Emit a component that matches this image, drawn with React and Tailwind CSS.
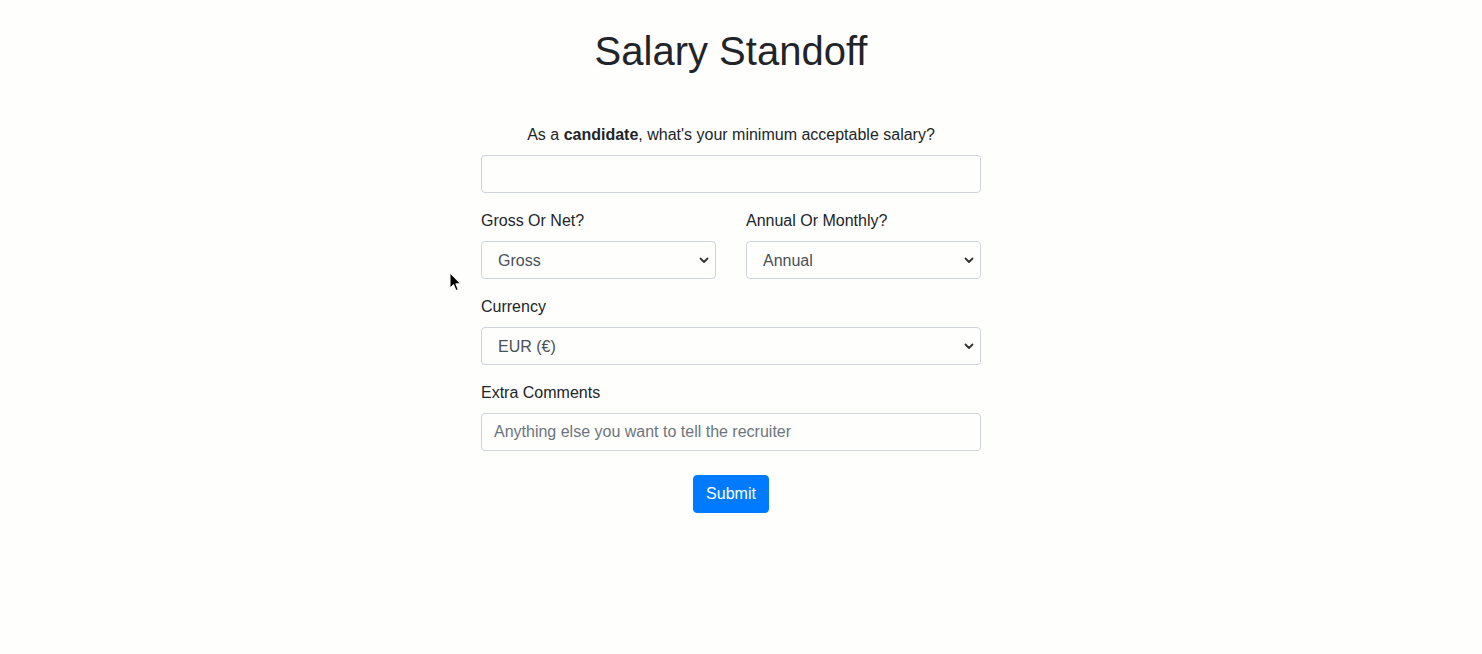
import React from "react";

const Chevron = () => (
  <svg className="pointer-events-none absolute right-[6px] top-1/2 -translate-y-1/2" width="12" height="12" viewBox="0 0 12 12">
    <path d="M2.5 4.5 L6 8 L9.5 4.5" fill="none" stroke="#333" strokeWidth="1.8" strokeLinecap="round" strokeLinejoin="round" />
  </svg>
);

const Select = ({ value, options }) => (
  <div className="relative">
    <select
      defaultValue={value}
      className="block w-full h-[38px] appearance-none rounded-[4px] border border-[#ced4da] bg-[#fefefc] pl-[16px] pr-[28px] pt-[1px] text-[16px] text-[#495057] outline-none"
    >
      {options.map((o) => (
        <option key={o}>{o}</option>
      ))}
    </select>
    <Chevron />
  </div>
);

export default function App() {
  return (
    <div
      className="relative min-h-screen w-full bg-[#fefefc] text-[#212529]"
      style={{ fontFamily: '"Liberation Sans", Arial, sans-serif' }}
    >
      <div className="flex flex-col items-center pt-[27px] pr-[20px]">
        <h1 className="text-[40px] leading-[48px] font-normal">Salary Standoff</h1>
        <form className="mt-[48px] w-[500px] text-[16px] leading-[24px]" onSubmit={(e) => e.preventDefault()}>
          <div className="mb-[16px]">
            <label className="mb-[8px] block text-center">
              As a <b className="font-bold">candidate</b>, what's your minimum acceptable salary?
            </label>
            <input
              type="text"
              className="block h-[38px] w-full rounded-[4px] border border-[#ced4da] bg-[#fefefc] px-[12px] text-[16px] text-[#495057] outline-none"
            />
          </div>
          <div className="mb-[16px] grid grid-cols-2 gap-x-[30px]">
            <div>
              <label className="mb-[8px] block">Gross Or Net?</label>
              <Select value="Gross" options={["Gross", "Net"]} />
            </div>
            <div>
              <label className="mb-[8px] block">Annual Or Monthly?</label>
              <Select value="Annual" options={["Annual", "Monthly"]} />
            </div>
          </div>
          <div className="mb-[16px]">
            <label className="mb-[8px] block">Currency</label>
            <Select value="EUR (€)" options={["EUR (€)", "USD ($)", "GBP (£)"]} />
          </div>
          <div className="mb-[24px]">
            <label className="mb-[8px] block">Extra Comments</label>
            <input
              type="text"
              placeholder="Anything else you want to tell the recruiter"
              className="block h-[38px] w-full rounded-[4px] border border-[#ced4da] bg-[#fefefc] px-[12px] text-[16px] text-[#495057] outline-none placeholder:text-[#6c757d]"
            />
          </div>
          <div className="flex justify-center">
            <button
              type="submit"
              className="h-[38px] rounded-[4px] border border-[#007bff] bg-[#007bff] px-[12px] text-[16px] text-white"
            >
              Submit
            </button>
          </div>
        </form>
      </div>
      <svg className="pointer-events-none absolute left-[449px] top-[272px]" width="14" height="21" viewBox="0 0 14 21">
        <path d="M1 1 L1 16 L4.5 12.5 L7 18.5 L9.2 17.6 L6.8 11.8 L11.5 11.8 Z" fill="#000" stroke="#fff" strokeWidth="1" strokeLinejoin="round" />
      </svg>
    </div>
  );
}
